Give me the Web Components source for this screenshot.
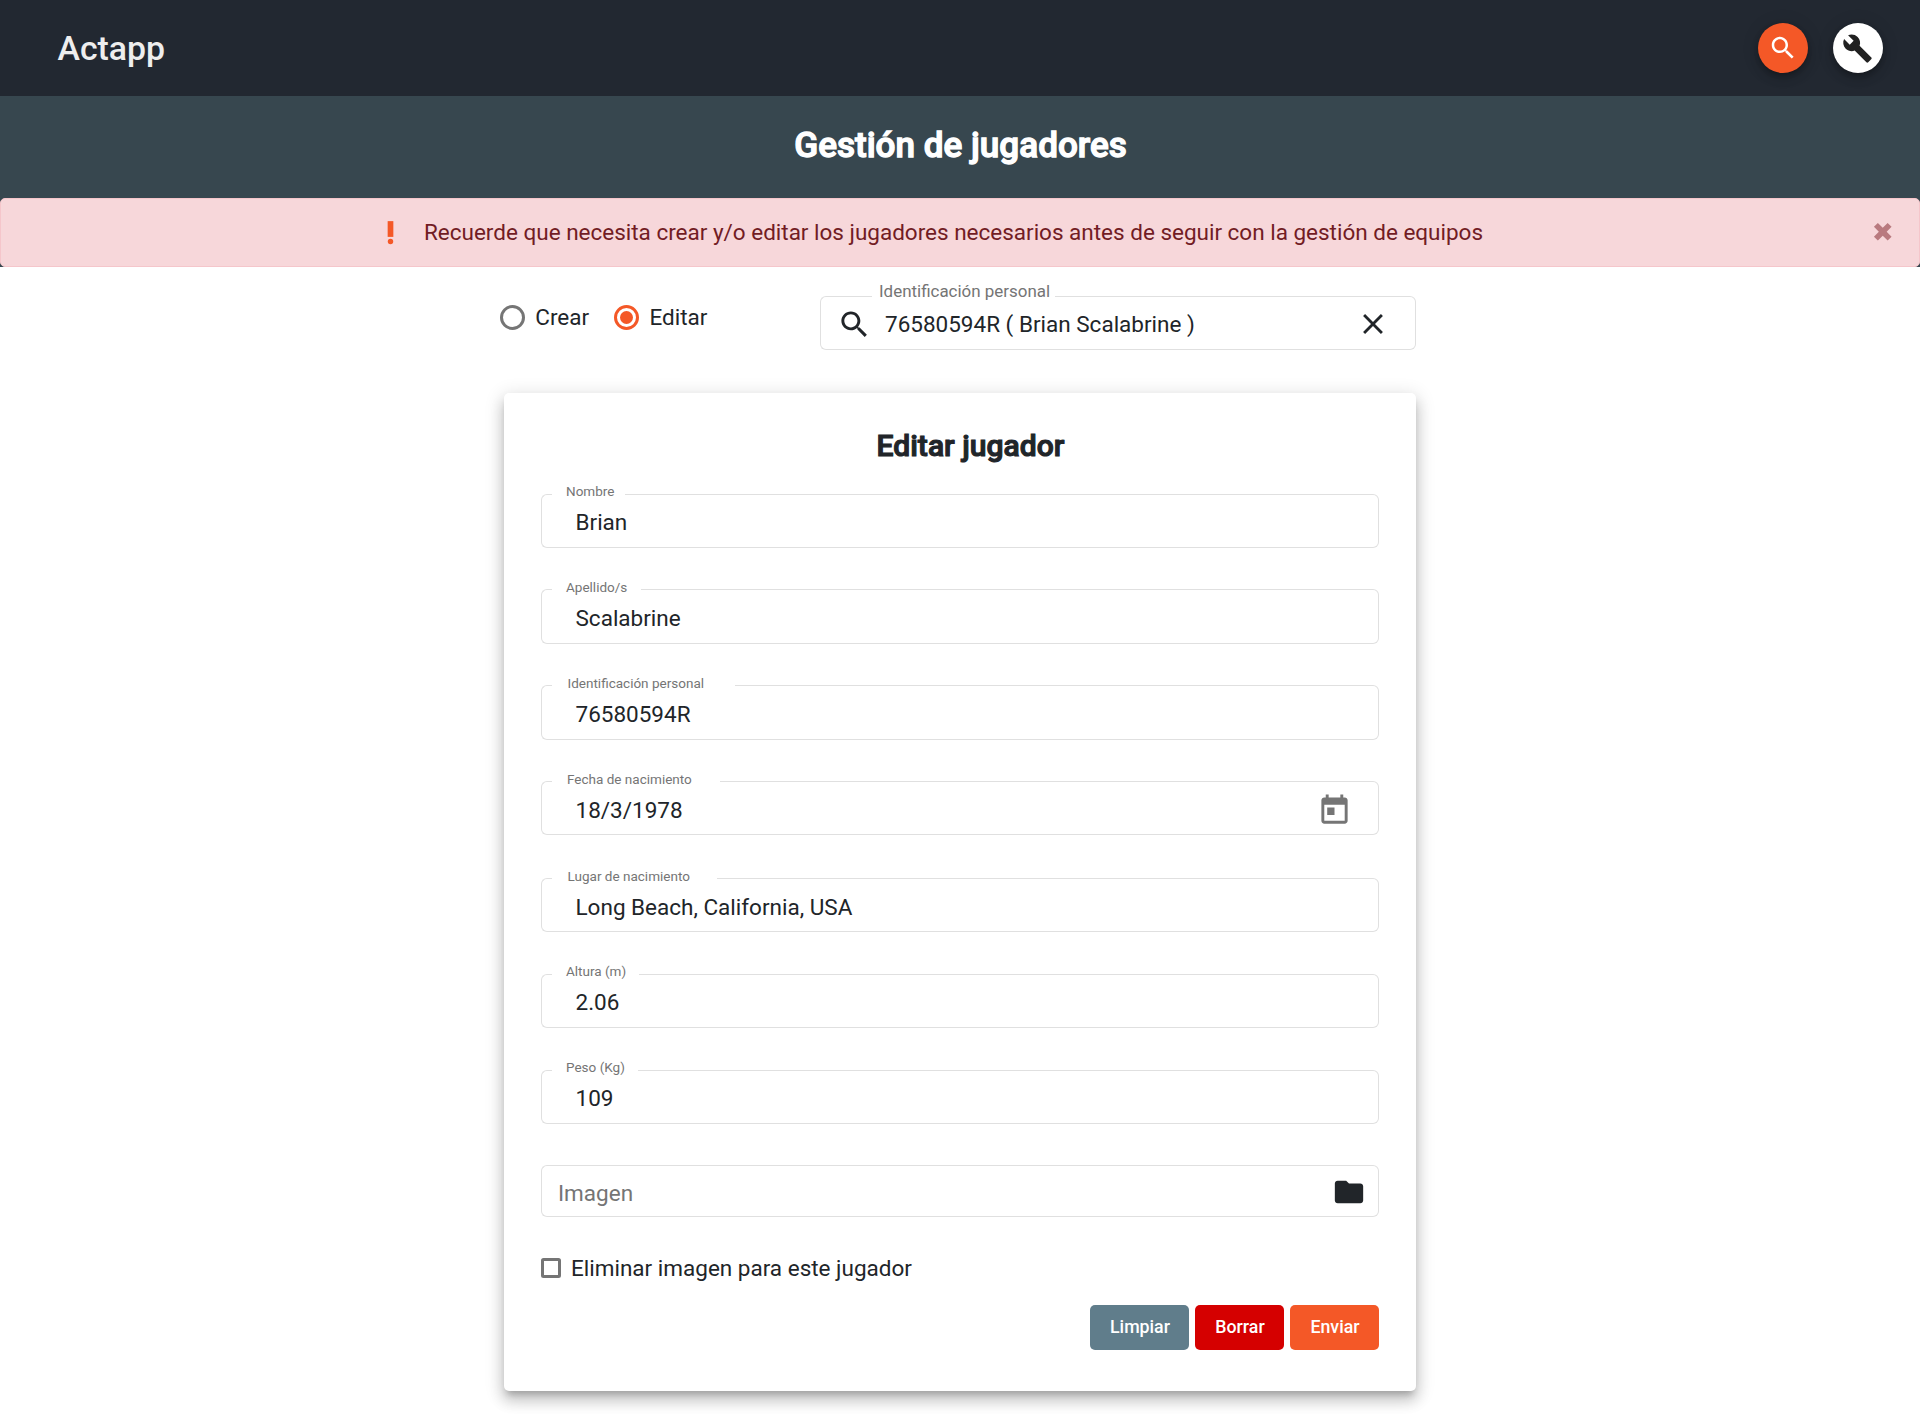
<!DOCTYPE html>
<html lang="es">
<head>
<meta charset="utf-8">
<title>Actapp</title>
<style>
body{margin:0;background:#fff;font:22.5px/30px Roboto,"Liberation Sans",sans-serif;color:#212529}
</style>
</head>
<body>
<player-page></player-page>
<script>
const define = (name, html) => customElements.define(name, class extends HTMLElement {
  constructor() {
    super();
    const t = document.createElement('template');
    t.innerHTML = html;
    this.attachShadow({mode: 'open'}).append(t.content.cloneNode(true));
  }
});

const ICONS = {
  search: '<path d="M15.5 14h-.79l-.28-.27C15.41 12.59 16 11.11 16 9.5 16 5.91 13.09 3 9.5 3S3 5.91 3 9.5 5.91 16 9.5 16c1.61 0 3.09-.59 4.23-1.57l.27.28v.79l5 4.99L20.49 19l-4.99-5zm-6 0C7.01 14 5 11.99 5 9.5S7.01 5 9.5 5 14 7.01 14 9.5 11.99 14 9.5 14z"/>',
  build: '<path d="M22.7 19l-9.1-9.1c.9-2.3.4-5-1.5-6.9-2-2-5-2.4-7.4-1.3L9 6 6 9 1.6 4.7C.4 7.1.9 10.1 2.9 12.1c1.9 1.9 4.6 2.4 6.9 1.5l9.1 9.1c.4.4 1 .4 1.4 0l2.3-2.3c.5-.4.5-1.1.1-1.4z"/>',
  close: '<path d="M19 6.41L17.59 5 12 10.59 6.41 5 5 6.41 10.59 12 5 17.59 6.41 19 12 13.41 17.59 19 19 17.59 13.41 12z"/>',
  today: '<path d="M19 3h-1V1h-2v2H8V1H6v2H5c-1.11 0-1.99.9-1.99 2L3 19c0 1.1.89 2 2 2h14c1.1 0 2-.9 2-2V5c0-1.1-.9-2-2-2zm0 16H5V8h14v11zM7 10h5v5H7z"/>',
  folder: '<path d="M10 4H4c-1.1 0-1.99.9-1.99 2L2 18c0 1.1.9 2 2 2h16c1.1 0 2-.9 2-2V8c0-1.1-.9-2-2-2h-8l-2-2z"/>',
  alert: '<circle cx="12" cy="18.9" r="2.1"/><path d="M9.8 3.2h4.4v12.2H9.8z"/>',
  dismiss: '<path d="M3 7L7 3 12 8 17 3 21 7 16 12 21 17 17 21 12 16 7 21 3 17 8 12z"/>'
};

customElements.define('md-icon', class extends HTMLElement {
  constructor() {
    super();
    this.attachShadow({mode: 'open'});
  }
  connectedCallback() {
    const s = this.getAttribute('size');
    this.shadowRoot.innerHTML = `<style>:host{display:block;flex:none;width:${s}px;height:${s}px}svg{display:block;fill:currentColor}</style>
      <svg width="${s}" height="${s}" viewBox="0 0 24 24">${ICONS[this.getAttribute('name')]}</svg>`;
  }
});

define('round-button', `<style>
:host{display:flex;width:50px;height:50px;border-radius:50%;align-items:center;justify-content:center;
box-shadow:0 3px 5px -1px rgba(0,0,0,.2),0 6px 10px rgba(0,0,0,.14),0 1px 18px rgba(0,0,0,.12)}
</style><slot></slot>`);

define('app-bar', `<style>
:host{display:flex;height:96px;box-sizing:border-box;background:#222831;padding:0 37px 0 57.5px;align-items:center;gap:25px}
b{flex:1;font-weight:500;font-size:33.8px;line-height:40px;color:#eee;padding-top:1px}
md-icon{margin-right:1px}
.find{background:#f45827;color:#fff}.tool{background:#fff;color:#212121}
</style><b>Actapp</b>
<round-button class="find"><md-icon name="search" size="30"></md-icon></round-button>
<round-button class="tool"><md-icon name="build" size="31"></md-icon></round-button>`);

define('title-band', `<style>
:host{display:flex;flex-direction:column;height:171px;background:#37474f}
h1{margin:0;padding-left:1px;height:102px;line-height:98px;text-align:center;font-size:35.1px;font-weight:500;-webkit-text-stroke:1.3px #fff;color:#fff}
</style><h1><slot></slot></h1><slot name="alert"></slot>`);

define('alert-bar', `<style>
:host{display:flex;box-sizing:border-box;height:69px;border:1px solid #f5c6cb;border-radius:5px;background:#f7d7da;color:#721c24;
align-items:center;padding:0 24.5px 0 374px}
span{flex:1;padding:0 0 2px 18px;letter-spacing:-.008px}
.mark{color:#f45827}.x{color:#b97a7f;margin-bottom:1px}
</style><md-icon class="mark" name="alert" size="31"></md-icon><span><slot></slot></span><md-icon class="x" name="dismiss" size="23.5"></md-icon>`);

define('radio-option', `<style>
:host{display:flex;align-items:center;height:30px}
i{box-sizing:border-box;width:25px;height:25px;border:3px solid #757575;border-radius:50%;display:flex;align-items:center;justify-content:center}
:host([checked]) i{border-color:#f45827}
:host([checked]) i::before{content:"";width:13px;height:13px;border-radius:50%;background:#f45827}
span{padding-left:10.3px}
</style><i></i><span><slot></slot></span>`);

customElements.define('outlined-field', class extends HTMLElement {
  constructor() {
    super();
    this.attachShadow({mode: 'open'});
  }
  connectedCallback() {
    const label = this.getAttribute('label');
    this.shadowRoot.innerHTML = `<style>
:host{display:grid;height:var(--h,54px);box-sizing:border-box}
.outline,.content{grid-area:1/1;display:flex;min-width:0;box-sizing:border-box}
.outline>*{box-sizing:border-box;border:0 solid #e0e0e0;border-width:1px 0}
.start{width:var(--start,11px);border-left-width:1px!important;border-radius:6px 0 0 6px}
.notch{width:var(--notch,0px);border-top-color:transparent!important;padding-left:var(--lx,14px)}
.end{flex:1;border-right-width:1px!important;border-radius:0 6px 6px 0}
label{display:block;margin-top:var(--ly,-14px);line-height:20px;font-size:var(--ls,13.53px);color:#757575;white-space:nowrap}
.content{align-items:center;padding:var(--vy,3px) var(--pr,12px) 0 var(--pl,34.5px)}
.value{flex:1;white-space:nowrap;padding-bottom:2px}
</style>
<div class="outline"><div class="start"></div>${label ? `<div class="notch"><label>${label}</label></div>` : ''}<div class="end"></div></div>
<div class="content"><slot name="lead"></slot><div class="value"><slot></slot></div><slot name="trail"></slot></div>`;
  }
});

define('check-option', `<style>
:host{display:flex;align-items:center;height:30px}
i{box-sizing:border-box;width:20px;height:20px;border:3px solid #757575;border-radius:2.5px}
span{padding-left:10px}
</style><i></i><span><slot></slot></span>`);

define('flat-button', `<style>
:host{display:block;box-sizing:border-box;width:89px;height:45px;border-radius:5px;text-align:center;color:#fff;font-size:17.75px;font-weight:500;line-height:44px;padding-left:1px}
</style><slot></slot>`);

define('player-card', `<style>
:host{display:flex;flex-direction:column;box-sizing:border-box;width:912px;height:998px;padding:36px 37px 0;border-radius:5px;background:#fff;
box-shadow:0 6px 6px -3px rgba(0,0,0,.2),0 10px 14px 1px rgba(0,0,0,.14),0 4px 18px 3px rgba(0,0,0,.12)}
h2{margin:0 0 31px;padding-left:21px;height:34px;line-height:34px;text-align:center;font-size:30.1px;font-weight:500;-webkit-text-stroke:1.1px #212529}
outlined-field{margin-bottom:var(--gap,41px)}
.image{--h:52px;--pl:17px;--pr:13px;--gap:36px;--vy:1px;color:#757575}
.image span{display:block;padding-top:5px}
.image md-icon{color:#212529}
.today{color:#757575;margin-bottom:1px}
.actions{display:flex;justify-content:flex-end;gap:6px;margin-top:22px}
.clear{background:#607d8b;width:99px}.delete{background:#d50000}.send{background:#f45827}
</style>
<h2>Editar jugador</h2>
<outlined-field label="Nombre" style="--notch:73px">Brian</outlined-field>
<outlined-field label="Apellido/s" style="--h:55px;--notch:89px;--vy:4px;--ly:-13px">Scalabrine</outlined-field>
<outlined-field label="Identificación personal" style="--h:55px;--notch:183px;--vy:4px;--ly:-13px;--lx:15.5px">76580594R</outlined-field>
<outlined-field label="Fecha de nacimiento" style="--notch:168px;--vy:5px;--gap:43px;--pr:27.5px;--lx:15px;--ly:-13px">18/3/1978<md-icon class="today" slot="trail" name="today" size="35"></md-icon></outlined-field>
<outlined-field label="Lugar de nacimiento" style="--notch:165px;--vy:5px;--gap:42px;--ly:-13px;--lx:15.5px">Long Beach, California, USA</outlined-field>
<outlined-field label="Altura (m)" style="--notch:87px;--gap:42px">2.06</outlined-field>
<outlined-field label="Peso (Kg)" style="--notch:86px">109</outlined-field>
<outlined-field class="image"><span>Imagen</span><md-icon slot="trail" name="folder" size="34"></md-icon></outlined-field>
<check-option>Eliminar imagen para este jugador</check-option>
<div class="actions"><flat-button class="clear">Limpiar</flat-button><flat-button class="delete">Borrar</flat-button><flat-button class="send">Enviar</flat-button></div>`);

define('player-page', `<style>
:host{display:block;height:1427px;overflow:hidden}
main{width:912px;margin:0 auto}
.pick{display:flex;height:126px}
.pick radio-option{margin-top:35px}
.pick radio-option:first-child{margin-left:-4px}
.pick radio-option+radio-option{margin-left:25px}
.find{width:596px;margin:29px 0 0 auto;--start:52px;--notch:183px;--lx:7px;--ly:-16px;--ls:16.95px;--pl:17px;--pr:26px;--vy:3px}
.find md-icon{margin-bottom:1px}
.find md-icon[slot=lead]{margin-right:13px}
</style>
<app-bar></app-bar>
<title-band>Gestión de jugadores<alert-bar slot="alert">Recuerde que necesita crear y/o editar los jugadores necesarios antes de seguir con la gestión de equipos</alert-bar></title-band>
<main>
<div class="pick"><radio-option>Crear</radio-option><radio-option checked>Editar</radio-option>
<outlined-field class="find" label="Identificación personal"><md-icon slot="lead" name="search" size="35"></md-icon>76580594R ( Brian Scalabrine )<md-icon slot="trail" name="close" size="34"></md-icon></outlined-field></div>
<player-card></player-card>
</main>`);
</script>
</body>
</html>
